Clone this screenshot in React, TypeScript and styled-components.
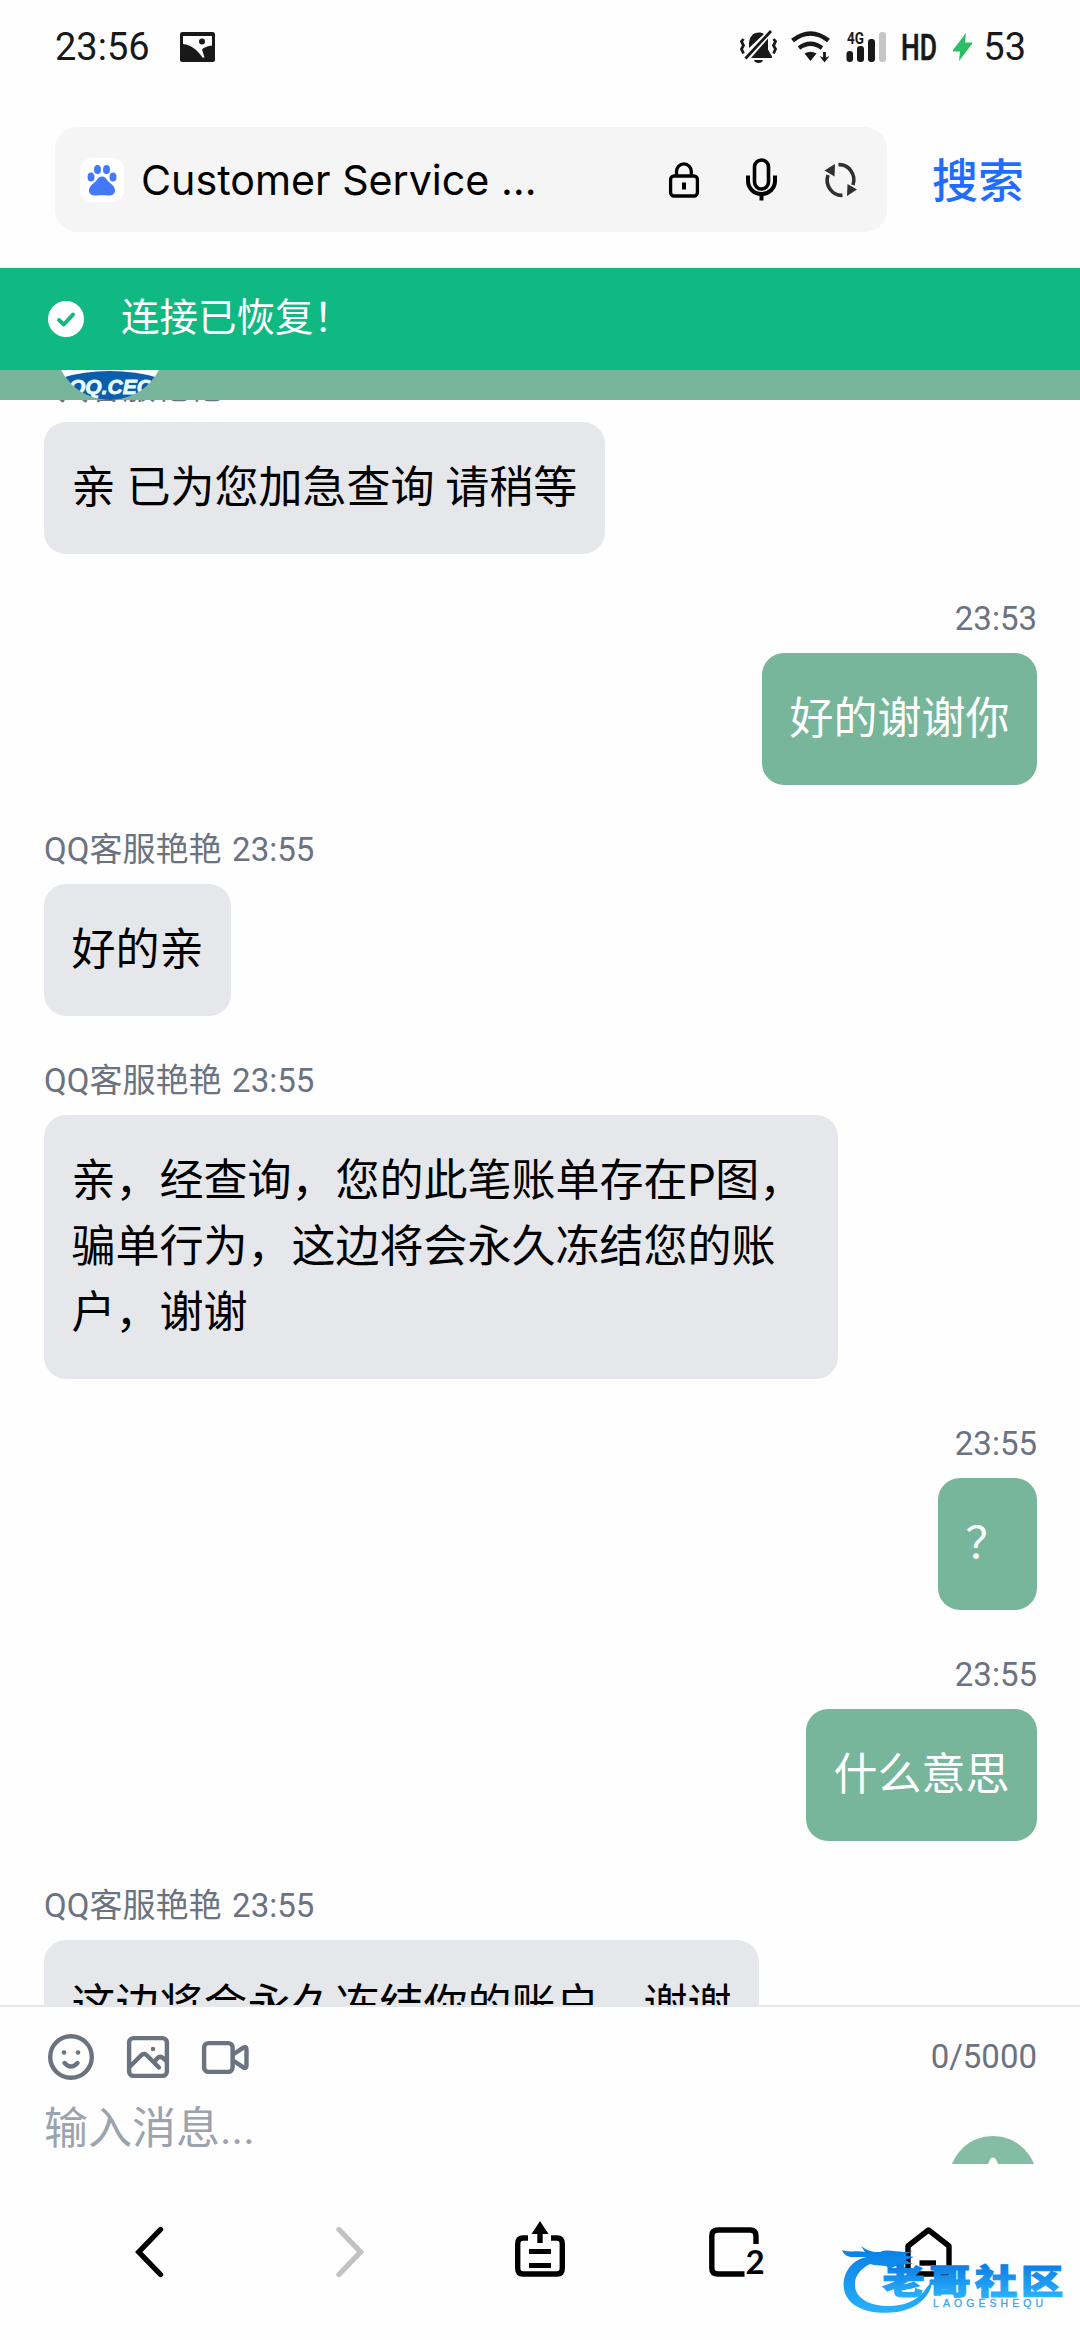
import React from "react";
import styled, { createGlobalStyle } from "styled-components";

const GlobalStyle = createGlobalStyle`
  * { box-sizing: border-box; }
  body {
    margin: 0;
    background: #fefefe;
    font-family: Roboto, "Noto Sans CJK SC", sans-serif;
    color: #000;
  }
  svg { display: block; flex: none; overflow: visible; }
`;

const Screen = styled.div`
  position: relative;
  width: 1080px;
  height: 2340px;
  display: flex;
  flex-direction: column;
  overflow: hidden;
  background: #fefefe;
`;

const StatusBar = styled.header`
  height: 94px;
  padding: 0 54px 0 55px;
  display: flex;
  align-items: center;
  flex: none;
  color: #191919;
`;

const StatusText = styled.span`
  font-size: 38px;
  line-height: 44px;
  white-space: nowrap;
`;

const StatusGroup = styled.div<{ $push?: boolean }>`
  display: flex;
  align-items: center;
  margin-left: ${(p) => (p.$push ? "auto" : "30px")};
`;

const Gap = styled.span<{ $w: number }>`
  width: ${(p) => p.$w}px;
  flex: none;
`;

const AddressRow = styled.div`
  height: 174px;
  flex: none;
  display: flex;
  align-items: center;
  padding: 2px 55px 5px;
`;

const AddressBox = styled.div`
  width: 832px;
  flex: none;
  height: 105px;
  border-radius: 22px;
  background: #f5f5f5;
  display: flex;
  align-items: center;
  padding: 0 30px 0 25px;
`;

const SiteTile = styled.div`
  width: 44px;
  height: 44px;
  border-radius: 12px;
  background: #fff;
  display: flex;
  align-items: center;
  justify-content: center;
`;

const SiteTitle = styled.div`
  flex: 1;
  margin-left: 17px;
  font-family: Inter, Roboto, sans-serif;
  font-size: 41.2px;
  line-height: 50px;
  white-space: pre;
`;

const AddressActions = styled.div`
  display: flex;
  align-items: center;
  gap: 47px;
`;

const SearchLabel = styled.button`
  border: 0;
  background: none;
  padding: 0;
  margin: -5px 0 0 45px;
  font-family: "Noto Sans CJK SC", sans-serif;
  font-size: 46px;
  line-height: 60px;
  font-weight: 500;
  color: #1f6dff;
  white-space: nowrap;
`;

const Banner = styled.div`
  height: 102px;
  flex: none;
  background: #10b981;
  color: #fff;
  display: flex;
  align-items: center;
  padding-left: 48px;
  gap: 37px;
  font-size: 38.5px;
  line-height: 55px;
`;

const BannerText = styled.span`
  margin-top: -4px;
`;

const AgentStrip = styled.div`
  height: 30px;
  flex: none;
  background: #77b69a;
  padding-left: 55px;
  display: flex;
  align-items: flex-end;
  overflow: hidden;
`;

const MessageList = styled.main`
  height: 1605px;
  flex: none;
  overflow: hidden;
  padding: 0 43px 0 44px;
`;

const MessageStack = styled.div`
  display: flex;
  flex-direction: column;
  gap: 43px;
  margin-top: -34px;
`;

const MessageItem = styled.article<{ $mine?: boolean }>`
  display: flex;
  flex-direction: column;
  align-items: ${(p) => (p.$mine ? "flex-end" : "flex-start")};
`;

const Meta = styled.div`
  height: 56px;
  font-size: 33px;
  line-height: 44px;
  word-spacing: 2.5px;
  color: #6b7280;
  white-space: nowrap;
`;

const Bubble = styled.div<{ $mine?: boolean }>`
  max-width: 794px;
  padding: 33px 27.5px;
  border-radius: 22px;
  font-size: 44px;
  line-height: 66px;
  background: ${(p) => (p.$mine ? "#77b69a" : "#e5e7eb")};
  color: ${(p) => (p.$mine ? "#fff" : "#000")};
`;

const Composer = styled.section`
  height: 159px;
  flex: none;
  border-top: 2px solid #e5e7eb;
  padding: 27px 43px 0 44px;
  overflow: hidden;
  display: flex;
  flex-direction: column;
`;

const ComposerTools = styled.div`
  display: flex;
  align-items: center;
  height: 46px;
  gap: 33px;
  padding-left: 4px;
`;

const Counter = styled.span`
  margin-left: auto;
  font-size: 33px;
  line-height: 44px;
  color: #6b7280;
`;

const ComposerRow = styled.div`
  display: flex;
  justify-content: space-between;
  align-items: flex-start;
  margin-top: 16px;
`;

const Placeholder = styled.span`
  font-size: 44px;
  line-height: 66px;
  color: #9ca3af;
`;

const SendButton = styled.button`
  width: 88px;
  height: 88px;
  border: 0;
  padding: 0;
  margin-top: 40px;
  border-radius: 50%;
  background: #84bda3;
  flex: none;
`;

const NavBar = styled.nav`
  flex: 1;
  display: flex;
  align-items: flex-start;
  justify-content: space-between;
  padding: 55px 120px 0;
`;

const NavButton = styled.button`
  width: 60px;
  height: 64px;
  border: 0;
  padding: 0;
  background: none;
`;

const Watermark = styled.div`
  position: absolute;
  left: 840px;
  top: 2238px;
  width: 230px;
  height: 80px;
`;

const PhotoIcon = () => (
  <svg width="35" height="30" viewBox="0 0 35 30">
    <rect x="0" y="0" width="35" height="30" rx="2.5" fill="#191919" />
    <path d="M3 4 H32 V13.5 C27.5 14 24 15.5 22 17.5 L24.5 25.5 H22.5 C17.5 18 11.5 13.2 3 12 Z" fill="#fefefe" />
    <circle cx="22" cy="9.5" r="3" fill="#191919" />
  </svg>
);

const MutedBell = () => (
  <svg width="39" height="36" viewBox="0 0 39 36" fill="#191919">
    <path d="M10 19 V15 C10 8 14 3.5 20 3.5 C22 3.5 23.5 4 25 5 Z" />
    <path d="M29 9.5 V20.5 L33 27.5 V29 H12 Z" />
    <path d="M15 31 H24 C23.5 35 15.5 35 15 31 Z" />
    <path d="M6.5 29.5 L32 2" stroke="#191919" strokeWidth="2.8" />
    <path
      d="M4.5 10 L2.5 12.5 L4.5 16.5 L2.5 20 L4.5 24.5 M34.5 10 L36.5 12.5 L34.5 16.5 L36.5 20 L34.5 24.5"
      fill="none"
      stroke="#191919"
      strokeWidth="2.8"
    />
  </svg>
);

const WifiIcon = () => (
  <svg width="40" height="32" viewBox="0 0 40 32">
    <path d="M1.5 9.5 Q19.5 -4.5 37.5 9.5" fill="none" stroke="#191919" strokeWidth="4.6" />
    <path d="M8 17 Q19.5 8.5 31 17" fill="none" stroke="#191919" strokeWidth="4.4" />
    <path d="M13.5 22.5 Q19.5 19 25.5 22.5 L19.5 30 Z" fill="#191919" />
    <path d="M33.5 21 V29" fill="none" stroke="#191919" strokeWidth="2.8" />
    <path d="M28.5 25 L33.5 27 L38.5 25 L33.5 31.5 Z" fill="#191919" />
  </svg>
);

const SignalIcon = () => (
  <svg width="42" height="32" viewBox="0 0 42 32" fill="#191919">
    <text x="1" y="12.5" fontFamily="Roboto" fontWeight="700" fontSize="16" textLength="17" lengthAdjust="spacingAndGlyphs">
      4G
    </text>
    <rect x="0.5" y="20" width="6.5" height="11" rx="3" />
    <rect x="11" y="15" width="7" height="16" rx="3" />
    <rect x="22" y="8" width="7" height="23" rx="3" />
    <rect x="33" y="1" width="7" height="30" rx="3" fill="#c6c6c6" />
  </svg>
);

const HdIcon = () => (
  <svg width="34" height="32" viewBox="0 0 34 32">
    <text x="-1" y="29" fontFamily="Roboto" fontWeight="500" fontSize="36.5" fill="#191919" stroke="#191919" strokeWidth="0.6" textLength="36" lengthAdjust="spacingAndGlyphs">
      HD
    </text>
  </svg>
);

const BoltIcon = () => (
  <svg width="19" height="28" viewBox="0 0 19 28">
    <path d="M13 0 L0 17 V18.5 H7 L6 28 L19 11 V9.5 H12 Z" fill="#2dbd63" />
  </svg>
);

const PawIcon = () => (
  <svg width="30" height="32" viewBox="0 0 30 32" fill="#4479fb">
    <ellipse cx="4" cy="13" rx="3.5" ry="4.5" />
    <ellipse cx="10.5" cy="5.5" rx="3.5" ry="4.6" />
    <ellipse cx="19.5" cy="5.5" rx="3.5" ry="4.6" />
    <ellipse cx="26" cy="13" rx="3.5" ry="4.5" />
    <path d="M15 12.5 C18 12.5 19 14.5 20.5 16.5 C22.5 19 28 21.5 28 26.5 C28 30 25 31.8 21.5 31.5 C18 31 12 31 8.5 31.5 C5 31.8 2 30 2 26.5 C2 21.5 7.5 19 9.5 16.5 C11 14.5 12 12.5 15 12.5 Z" />
  </svg>
);

const LockIcon = () => (
  <svg width="30" height="36" viewBox="0 0 30 36" fill="none" stroke="#000" strokeWidth="3.3">
    <path d="M7.5 14 V9.5 A7.4 7.6 0 0 1 22.3 9.5 V14" />
    <rect x="1.6" y="14" width="26.8" height="20" rx="3.5" />
    <path d="M15 20.5 V27.5" strokeWidth="4" />
  </svg>
);

const MicIcon = () => (
  <svg width="31" height="43" viewBox="0 0 31 43" fill="none" stroke="#000">
    <rect x="8.5" y="2" width="14" height="29" rx="7" strokeWidth="3.6" />
    <path d="M2 17.5 V23 A13.5 13 0 0 0 29 23 V17.5" strokeWidth="4" />
    <path d="M15.5 36 V42.5" strokeWidth="4" />
  </svg>
);

const RefreshIcon = () => (
  <svg width="33" height="36" viewBox="0 0 33 36" fill="none" stroke="#303030" strokeWidth="3.6">
    <path d="M14.5 2.7 A14.5 15.3 0 0 1 29 23" />
    <path d="M18.5 33.3 A14.5 15.3 0 0 1 4 13" />
    <path d="M11 2 L0.5 8.5 L10.5 14.5 Z" fill="#303030" stroke="none" />
    <path d="M23 34 L33 27.5 L23.5 22 Z" fill="#303030" stroke="none" />
  </svg>
);

const CheckBadge = () => (
  <svg width="36" height="36" viewBox="0 0 36 36">
    <circle cx="18" cy="18" r="18" fill="#fff" />
    <path d="M11 19 L15.8 23.5 L25 13.5" fill="none" stroke="#10b981" strokeWidth="4" strokeLinecap="round" strokeLinejoin="round" />
  </svg>
);

const AgentAvatar = () => (
  <svg width="110" height="110" viewBox="0 0 110 110">
    <defs>
      <clipPath id="avatar-disc">
        <circle cx="55" cy="55" r="55" />
      </clipPath>
    </defs>
    <g clipPath="url(#avatar-disc)">
      <rect width="110" height="110" fill="#fff" />
      <ellipse cx="55" cy="103" rx="66" ry="22" fill="#0b5eab" />
      <text x="14" y="104" fontFamily="Liberation Sans" fontWeight="700" fontStyle="italic" fontSize="21" fill="#e9fbff" stroke="#e9fbff" strokeWidth="0.8" textLength="84" lengthAdjust="spacingAndGlyphs">
        QQ.CEO
      </text>
    </g>
  </svg>
);

const SmileIcon = () => (
  <svg width="46" height="46" viewBox="0 0 46 46" fill="none" stroke="#6b7280" strokeWidth="4.4" strokeLinecap="round">
    <circle cx="23" cy="23" r="20.8" />
    <circle cx="16" cy="18.5" r="2.3" fill="#6b7280" stroke="none" />
    <circle cx="30" cy="18.5" r="2.3" fill="#6b7280" stroke="none" />
    <path d="M16.5 29 Q23 36 29.5 29" />
  </svg>
);

const ImageIcon = () => (
  <svg width="42" height="42" viewBox="0 0 42 42" fill="none" stroke="#6b7280" strokeWidth="4.4" strokeLinecap="round" strokeLinejoin="round">
    <rect x="2.1" y="2.1" width="37.8" height="37.8" rx="4.5" />
    <path d="M2.5 31 L14 19.5 Q17 16.5 20 19.5 L32 31.5 M27 26.5 L30 22.5 Q33 19.5 36 22 L39.5 25" />
    <circle cx="26" cy="13" r="2.3" fill="#6b7280" stroke="none" />
  </svg>
);

const VideoIcon = () => (
  <svg width="47" height="33" viewBox="0 0 47 33" fill="none" stroke="#6b7280" strokeWidth="4.4" strokeLinejoin="round">
    <rect x="2.1" y="2.1" width="28.5" height="28.8" rx="4.5" />
    <path d="M31 13.5 L41 6.8 Q44.5 5 44.5 8.5 V24.5 Q44.5 28 41 26.2 L31 19.5" />
  </svg>
);

const SendArrow = () => (
  <svg width="88" height="88" viewBox="0 0 88 88">
    <path d="M44 21.5 Q46 21.5 47 23.5 L64 62 Q64.5 66 61 65 L44 59 L27 65 Q23.5 66 24 62 L41 23.5 Q42 21.5 44 21.5 Z" fill="#fff" />
  </svg>
);

const NavIcon = ({ children }: { children: React.ReactNode }) => (
  <svg width="60" height="64" viewBox="0 0 60 64" fill="none" stroke="#000" strokeWidth="5.4">
    {children}
  </svg>
);

const WatermarkArt = () => (
  <svg width="230" height="80" viewBox="0 0 230 80">
    <defs>
      <linearGradient id="wm-text" gradientUnits="userSpaceOnUse" x1="0" y1="27" x2="0" y2="60">
        <stop offset="0" stopColor="#0c7ee4" />
        <stop offset="1" stopColor="#2bb2fb" />
      </linearGradient>
      <linearGradient id="wm-ring" gradientUnits="userSpaceOnUse" x1="0" y1="10" x2="0" y2="76">
        <stop offset="0" stopColor="#087fe6" />
        <stop offset="1" stopColor="#28b2fb" />
      </linearGradient>
    </defs>
    <path
      d="M2 12 C10 15 18 12 25 14 L21 8 C29 14 34 14 40 14 C50 10 58 16 73 13 L64 17 L74 19 L65 22 L73 26 L60 26 L67 31 L56 28 L49 31 L46 28 L34 27 L30 26 C20 31 14 39 15 48 C16 62 33 69 52 68 C68 67 81 60 87 49 C92 45 92 39 91 37 C95 50 85 65 68 71 C53 77 29 76 16 68 C2 60 0 42 9 30 C15 22 22 20 27 19 L11 19 Q4 18 2 12 Z"
      fill="url(#wm-ring)"
    />
    <g transform="translate(42.5 0) scale(1.24 1)">
      <text
        x="0 37.2 74.6 111.8"
        y="56.5"
        fontFamily="Noto Sans CJK SC"
        fontWeight="900"
        fontSize="34"
        fill="url(#wm-text)"
        stroke="url(#wm-text)"
        strokeWidth="1.2"
      >
        老哥社区
      </text>
    </g>
    <text x="93" y="69" fontFamily="Liberation Sans" fontSize="10.5" fill="#3fa6f0" stroke="#3fa6f0" strokeWidth="0.3" textLength="110" lengthAdjust="spacing">
      LAOGESHEQU
    </text>
  </svg>
);

type Message = { text: string; meta: string; mine?: boolean };

const messages: Message[] = [
  { meta: "QQ客服艳艳", text: "亲 已为您加急查询 请稍等" },
  { meta: "23:53", text: "好的谢谢你", mine: true },
  { meta: "QQ客服艳艳 23:55", text: "好的亲" },
  { meta: "QQ客服艳艳 23:55", text: "亲，经查询，您的此笔账单存在P图，骗单行为，这边将会永久冻结您的账户，谢谢" },
  { meta: "23:55", text: "？", mine: true },
  { meta: "23:55", text: "什么意思", mine: true },
  { meta: "QQ客服艳艳 23:55", text: "这边将会永久冻结你的账户，谢谢" },
];

export default function App() {
  return (
    <Screen>
      <GlobalStyle />
      <StatusBar>
        <StatusText>23:56</StatusText>
        <StatusGroup>
          <PhotoIcon />
        </StatusGroup>
        <StatusGroup $push>
          <MutedBell />
          <Gap $w={13} />
          <WifiIcon />
          <Gap $w={15} />
          <SignalIcon />
          <Gap $w={14} />
          <HdIcon />
          <Gap $w={17} />
          <BoltIcon />
          <Gap $w={11} />
          <StatusText>53</StatusText>
        </StatusGroup>
      </StatusBar>

      <AddressRow>
        <AddressBox>
          <SiteTile>
            <PawIcon />
          </SiteTile>
          <SiteTitle>Customer Service …</SiteTitle>
          <AddressActions>
            <LockIcon />
            <MicIcon />
            <RefreshIcon />
          </AddressActions>
        </AddressBox>
        <SearchLabel>搜索</SearchLabel>
      </AddressRow>

      <Banner>
        <CheckBadge />
        <BannerText>连接已恢复！</BannerText>
      </Banner>

      <AgentStrip>
        <AgentAvatar />
      </AgentStrip>

      <MessageList>
        <MessageStack>
          {messages.map((m, i) => (
            <MessageItem key={i} $mine={m.mine}>
              <Meta>{m.meta}</Meta>
              <Bubble $mine={m.mine}>{m.text}</Bubble>
            </MessageItem>
          ))}
        </MessageStack>
      </MessageList>

      <Composer>
        <ComposerTools>
          <SmileIcon />
          <ImageIcon />
          <VideoIcon />
          <Counter>0/5000</Counter>
        </ComposerTools>
        <ComposerRow>
          <Placeholder>输入消息...</Placeholder>
          <SendButton>
            <SendArrow />
          </SendButton>
        </ComposerRow>
      </Composer>

      <NavBar>
        <NavButton>
          <NavIcon>
            <path d="M40.5 10.5 L18.8 33 L40.5 55.5" strokeLinecap="round" />
          </NavIcon>
        </NavButton>
        <NavButton>
          <NavIcon>
            <path d="M24 10.5 L45.5 33 L24 55.5" stroke="#c2c2c2" strokeLinecap="round" />
          </NavIcon>
        </NavButton>
        <NavButton>
          <NavIcon>
            <path d="M18 19 H13 Q7.7 19 7.7 25 V49 Q7.7 55 13 55 H47 Q52.3 55 52.3 49 V25 Q52.3 19 47 19 H41" />
            <path d="M19 32.5 H41 M19 46.5 H41" strokeWidth="5" />
            <path d="M30 24 V9" />
            <path d="M30 2 L38.5 15 H21.5 Z" fill="#000" stroke="none" />
          </NavIcon>
        </NavButton>
        <NavButton>
          <NavIcon>
            <path d="M39.5 55 H13 Q6.8 55 6.8 49 V17 Q6.8 11 13 11 H45 Q51 11 51 17 V25" />
            <text x="40.5" y="55" fontFamily="Lato" fontWeight="700" fontSize="33" fill="#000" stroke="none">
              2
            </text>
          </NavIcon>
        </NavButton>
        <NavButton>
          <NavIcon>
            <path d="M28.5 11 L49 27 V49 Q49 55 43 55 H14 Q8 55 8 49 V27 Z" strokeLinejoin="round" />
            <path d="M19.5 44 H36" />
          </NavIcon>
        </NavButton>
      </NavBar>

      <Watermark>
        <WatermarkArt />
      </Watermark>
    </Screen>
  );
}
